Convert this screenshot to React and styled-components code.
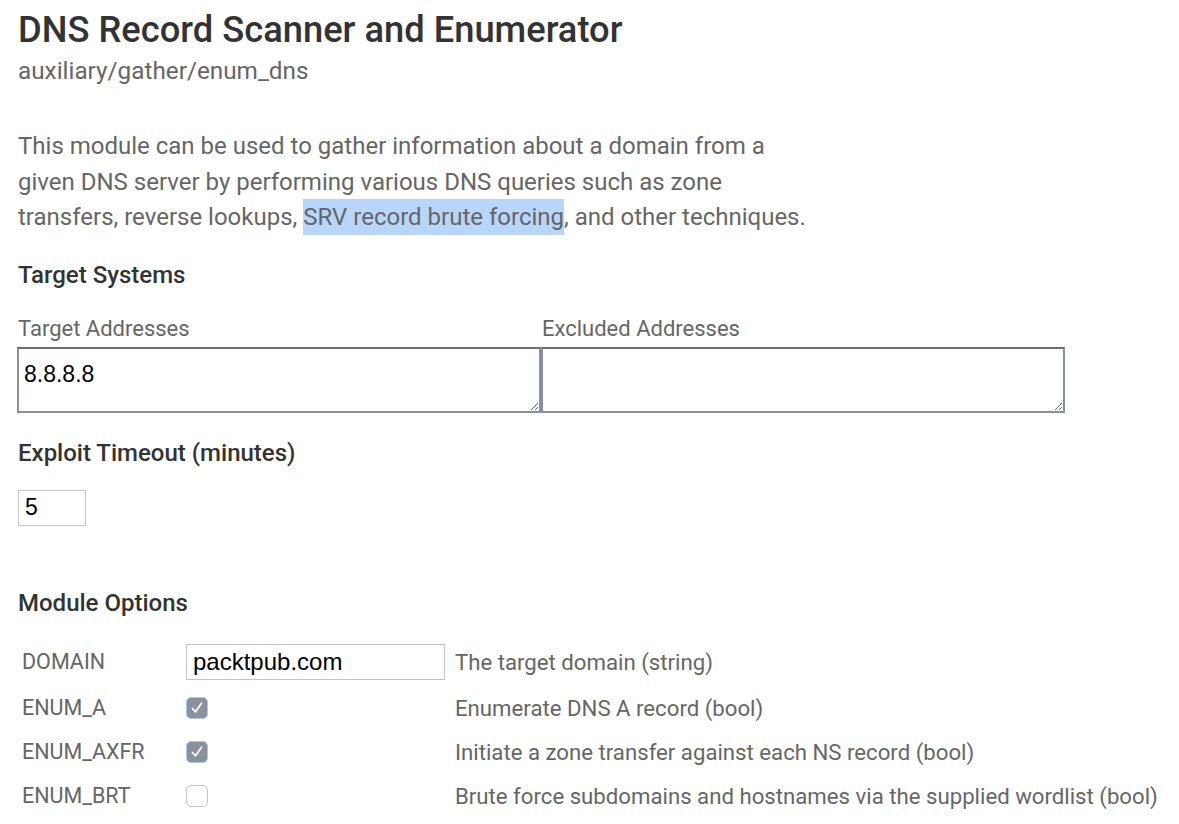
import React from 'react';
import styled, { createGlobalStyle } from 'styled-components';

const GlobalStyle = createGlobalStyle`
    body {
        margin: 0;
        background: #fff;
        font-family: Roboto, "Liberation Sans", sans-serif;
    }
`

const Page = styled.div`
    padding: 8px 18px 0 18px;
    color: #666;
`

const Title = styled.h1`
    margin: 0;
    font-size: 36.3px;
    font-weight: 500;
    color: #333;
    line-height: 44px;
`

const Path = styled.div`
    font-size: 24.3px;
    line-height: 30px;
    color: #666;
    margin-top: 4px;
`

const Description = styled.p`
    margin: 43px 0 0 0;
    max-width: 830px;
    font-size: 24px;
    line-height: 35.5px;
    color: #666;

    > mark {
        background: #b8d6fb;
        color: #666;
        padding: 4px 0;
    }
`

const SectionTitle = styled.h2`
    margin: ${p => p.top || 0}px 0 0 0;
    font-size: 24px;
    font-weight: 500;
    color: #333;
    line-height: 30px;
`

const AddressRow = styled.div`
    display: flex;
    margin-top: 26px;
    margin-left: -1px;
`

const Field = styled.div`
    display: flex;
    flex-direction: column;
    width: 524px;
`

const Label = styled.label`
    font-size: 22px;
    line-height: 26px;
    color: #666;
    margin-bottom: 5px;
    padding-left: 1px;
`

const Area = styled.textarea`
    box-sizing: border-box;
    width: 524px;
    height: 66px;
    margin: 0;
    border: 2px solid #8a909c;
    border-top-color: #6e6e6e;
    padding: 12px 5px;
    font-family: "Liberation Sans", Arial, sans-serif;
    font-size: 23px;
    line-height: 26px;
    color: #000;
    resize: both;
    outline: none;
`

const SmallInput = styled.input`
    box-sizing: border-box;
    display: block;
    width: 68px;
    height: 36px;
    margin-top: 22px;
    border: 1px solid #c4c4c4;
    padding: 0 6px;
    font-family: "Liberation Sans", Arial, sans-serif;
    font-size: 23px;
    color: #000;
    outline: none;
`

const OptionsTable = styled.table`
    margin-top: 20px;
    border-collapse: collapse;

    td {
        padding: 0;
    }
`

const Row = styled.tr`
    height: ${p => p.h || 44}px;
`

const Name = styled.td`
    width: 164px;
    && { padding-left: 4px; }
    font-size: 21.5px;
    color: #666;
    vertical-align: middle;
`

const Control = styled.td`
    width: 269px;
    vertical-align: middle;
`

const Help = styled.td`
    font-size: 22.2px;
    color: #666;
    vertical-align: middle;
    white-space: nowrap;
`

const TextInput = styled.input`
    box-sizing: border-box;
    display: block;
    width: 259px;
    height: 36px;
    border: 1px solid #c4c4c4;
    padding: 0 6px;
    font-family: "Liberation Sans", Arial, sans-serif;
    font-size: 24px;
    color: #000;
    outline: none;
`

const Box = styled.span`
    box-sizing: border-box;
    display: flex;
    align-items: center;
    justify-content: center;
    width: 22px;
    height: 22px;
    border-radius: 5px;
    background: ${p => p.checked ? '#8a909c' : '#fff'};
    border: 1px solid ${p => p.checked ? '#a9c8ee' : '#c4c4c4'};
`

const Check = ({ checked }) => (
    <Box checked={checked}>
        {checked &&
            <svg width="16" height="16" viewBox="0 0 16 16">
                <path d="M3.5 8.5 L6.5 11.8 L12.5 3.2" fill="none" stroke="#fff" strokeWidth="1.8" strokeLinecap="round" strokeLinejoin="round" />
            </svg>
        }
    </Box>
)

const options = [
    { name: 'ENUM_A', checked: true, help: 'Enumerate DNS A record (bool)' },
    { name: 'ENUM_AXFR', checked: true, help: 'Initiate a zone transfer against each NS record (bool)' },
    { name: 'ENUM_BRT', checked: false, help: 'Brute force subdomains and hostnames via the supplied wordlist (bool)' },
]

export default function App() {
    return (
        <Page>
            <GlobalStyle />
            <Title>DNS Record Scanner and Enumerator</Title>
            <Path>auxiliary/gather/enum_dns</Path>
            <Description>
                This module can be used to gather information about a domain from a<br />
                given DNS server by performing various DNS queries such as zone<br />
                transfers, reverse lookups, <mark>SRV record brute forcing</mark>, and other techniques.
            </Description>

            <SectionTitle top={24}>Target Systems</SectionTitle>
            <AddressRow>
                <Field>
                    <Label>Target Addresses</Label>
                    <Area defaultValue="8.8.8.8" />
                </Field>
                <Field>
                    <Label>Excluded Addresses</Label>
                    <Area defaultValue="" />
                </Field>
            </AddressRow>

            <SectionTitle top={25}>Exploit Timeout (minutes)</SectionTitle>
            <SmallInput defaultValue="5" />

            <SectionTitle top={62}>Module Options</SectionTitle>
            <OptionsTable>
                <tbody>
                    <Row h={48}>
                        <Name>DOMAIN</Name>
                        <Control><TextInput defaultValue="packtpub.com" /></Control>
                        <Help>The target domain (string)</Help>
                    </Row>
                    {options.map(o =>
                        <Row key={o.name}>
                            <Name>{o.name}</Name>
                            <Control><Check checked={o.checked} /></Control>
                            <Help>{o.help}</Help>
                        </Row>
                    )}
                </tbody>
            </OptionsTable>
        </Page>
    );
}
